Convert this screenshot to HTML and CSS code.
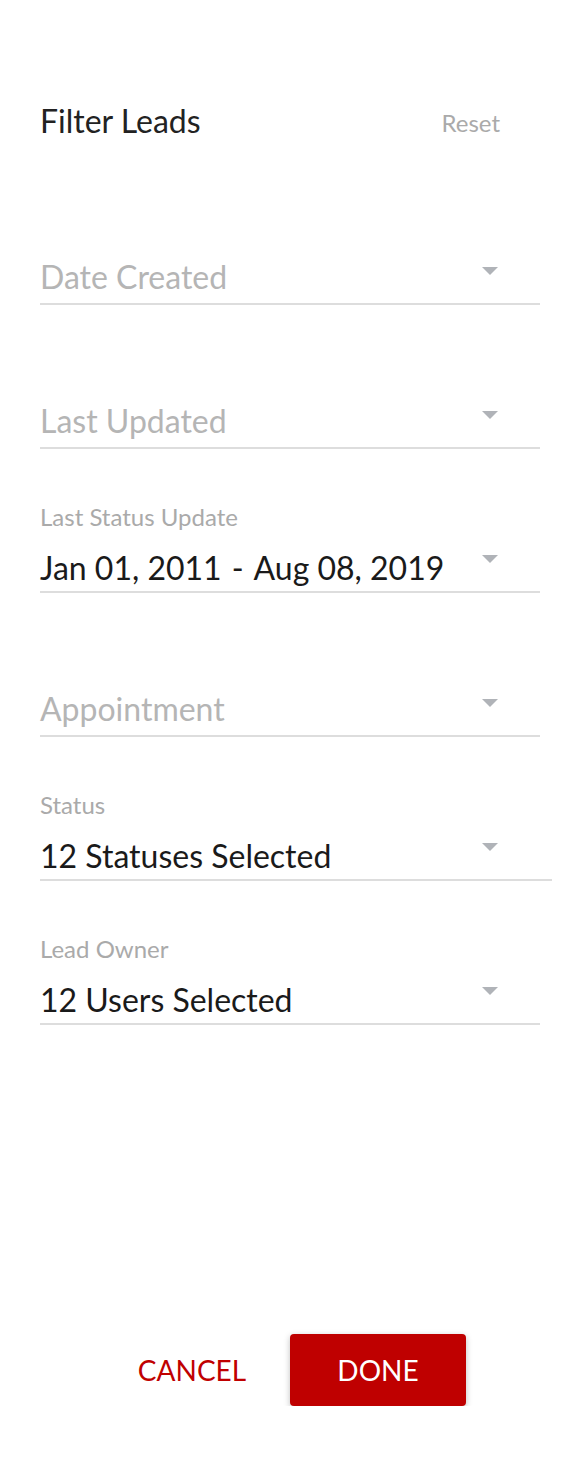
FILE: index.html
```html
<!DOCTYPE html>
<html lang="en">

<head>
    <meta charset="UTF-8">
    <meta name="viewport" content="width=device-width, initial-scale=1.0">
    <title>Filter Leads</title>
    <link rel="stylesheet" href="styles.css">
</head>

<body>
    <div class="container">
        <div class="header">
            <h2>Filter Leads</h2>
            <button class="reset">Reset</button>
        </div>

        <div class="field">
            <div class="row">
                <span class="placeholder">Date Created</span>
                <span class="arrow"></span>
            </div>
        </div>

        <div class="field">
            <div class="row">
                <span class="placeholder">Last Updated</span>
                <span class="arrow"></span>
            </div>
        </div>

        <div class="field filled">
            <label>Last Status Update</label>
            <div class="row">
                <span class="value">Jan 01, 2011<span class="sep">-</span>Aug 08, 2019</span>
                <span class="arrow"></span>
            </div>
        </div>

        <div class="field">
            <div class="row">
                <span class="placeholder">Appointment</span>
                <span class="arrow"></span>
            </div>
        </div>

        <div class="field filled wide">
            <label>Status</label>
            <div class="row">
                <span class="value">12 Statuses Selected</span>
                <span class="arrow"></span>
            </div>
        </div>

        <div class="field filled">
            <label>Lead Owner</label>
            <div class="row">
                <span class="value">12 Users Selected</span>
                <span class="arrow"></span>
            </div>
        </div>

        <div class="footer">
            <button class="cancel">CANCEL</button>
            <button class="done">DONE</button>
        </div>
    </div>
</body>

</html>
```

FILE: styles.css
```css
body {
    margin: 0;
    font-family: Lato, "Open Sans", sans-serif;
    background-color: #fff;
    color: #1a1a1a;
}

.container {
    width: 500px;
    padding: 100px 40px 0;
}

.header {
    display: flex;
    justify-content: space-between;
    align-items: center;
    height: 40px;
    margin-bottom: 21px;
}

h2 {
    margin: 0;
    font-size: 32px;
    font-weight: normal;
    color: #222;
}

.reset {
    background: none;
    border: none;
    padding: 0;
    margin-right: 40px;
    margin-top: 4px;
    font-family: inherit;
    font-size: 24px;
    color: #aaa;
    cursor: pointer;
}

.field {
    height: 142px;
    display: flex;
    flex-direction: column;
    justify-content: flex-end;
    border-bottom: 2px solid #ddd;
}

.field.wide {
    margin-right: -12px;
}

label {
    font-size: 24px;
    line-height: 28px;
    color: #aaa;
    margin-bottom: 18px;
}

.row {
    display: flex;
    justify-content: space-between;
    align-items: flex-start;
    font-size: 32px;
    line-height: 37px;
    padding-bottom: 8px;
}

.filled .row {
    padding-bottom: 5px;
}

.placeholder {
    color: #b5b5b5;
}

.value {
    color: #1a1a1a;
}

.sep {
    margin: 0 10px;
}

.arrow {
    width: 0;
    height: 0;
    margin-top: 9px;
    margin-right: 42px;
    border-left: 8px solid transparent;
    border-right: 8px solid transparent;
    border-top: 8px solid #b0b3b8;
}

.filled .arrow {
    margin-top: 6px;
}

.wide .arrow {
    margin-right: 54px;
}

.footer {
    display: flex;
    justify-content: center;
    gap: 10px;
    margin-top: 309px;
    padding-right: 10px;
}

.footer button {
    width: 176px;
    height: 72px;
    border: none;
    border-radius: 4px;
    font-family: inherit;
    font-size: 28px;
    cursor: pointer;
}

.cancel {
    background: none;
    color: #c00000;
}

.done {
    background: #bf0000;
    color: #fff;
    box-shadow: 0 2px 6px rgba(0, 0, 0, 0.25);
}
```
